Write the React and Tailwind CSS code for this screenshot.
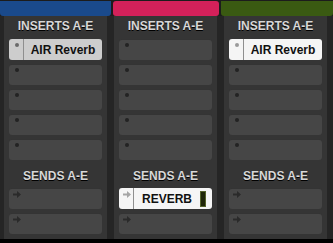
const Dot = ({ color }) => (
  <div className={`ml-[6px] mt-[4px] w-[4px] h-[4px] rounded-full ${color}`} />
);

const Arrow = ({ color }) => (
  <svg width="8" height="7" viewBox="0 0 8 7" className="ml-[4px] mt-[3px]">
    <path d="M0 2.5h4V0l4 3.5L4 7V4.5H0z" fill={color} />
  </svg>
);

const EmptySlot = ({ send }) => (
  <div className="h-[21px] rounded-[3px] bg-[#464646] shadow-[inset_0_1px_0_rgba(0,0,0,0.25)] flex items-start">
    {send ? <Arrow color="#2a2a2a" /> : <Dot color="bg-[#232323]" />}
  </div>
);

const Insert = ({ name, active }) => (
  <div
    className={`h-[21px] rounded-[3px] flex ${
      active ? "bg-[#f5f5f5]" : "bg-[#cdcdcd]"
    }`}
  >
    <div className="w-[15px] h-full border-r border-[#8f8f8f]">
      <Dot color={active ? "bg-[#9a9a9a]" : "bg-[#6a6a6a]"} />
    </div>
    <div className="flex-1 flex items-center justify-center text-[12px] font-bold text-[#111]">
      {name}
    </div>
  </div>
);

const Send = ({ name }) => (
  <div className="h-[21px] rounded-[3px] bg-[#f5f5f5] flex items-center">
    <div className="w-[15px] h-full border-r border-[#8f8f8f]">
      <Arrow color="#a5a5a5" />
    </div>
    <div className="flex-1 flex items-center justify-center text-[12px] font-bold text-[#111]">
      {name}
    </div>
    <div className="w-[6px] h-[16px] mr-[6px] bg-[#1f2608] border border-[#55632a]" />
  </div>
);

const Header = ({ label, className }) => (
  <div
    className={`flex items-center justify-center text-[12px] font-bold text-[#d8d8d8] [text-shadow:0_1px_0_#000] ${className}`}
  >
    {label}
  </div>
);

const columns = [
  { inserts: [{ name: "AIR Reverb", active: false }], send: null },
  { inserts: [], send: "REVERB" },
  { inserts: [{ name: "AIR Reverb", active: true }], send: null },
];

export default function App() {
  return (
    <div className="w-[333px] h-[243px] bg-black overflow-hidden font-['Liberation_Sans',Arial,sans-serif]">
      <div className="flex gap-[2px] h-[16px] pt-[1px] bg-[#1c1c1c]">
        <div className="w-[111px] rounded-b-[3px] bg-[#1a4a8c]" />
        <div className="w-[106px] rounded-[3px] bg-[#d3215a]" />
        <div className="w-[112px] rounded-b-[3px] bg-[#3a5a12]" />
      </div>
      <div className="flex h-[223px] bg-[#252525] pl-[4px] gap-[7px]">
        {columns.map((col, i) => (
          <div key={i} className="w-[103px] bg-[#353535] px-[5px] flex flex-col">
            <Header label="INSERTS A-E" className="h-[23px] pb-[4px]" />
            <div className="flex flex-col gap-[4px]">
              {[0, 1, 2, 3, 4].map((j) =>
                col.inserts[j] ? (
                  <Insert key={j} {...col.inserts[j]} />
                ) : (
                  <EmptySlot key={j} />
                )
              )}
            </div>
            <Header label="SENDS A-E" className="h-[28px] pt-[4px]" />
            <div className="flex flex-col gap-[4px]">
              {col.send ? <Send name={col.send} /> : <EmptySlot send />}
              <EmptySlot send />
            </div>
          </div>
        ))}
      </div>
    </div>
  );
}
